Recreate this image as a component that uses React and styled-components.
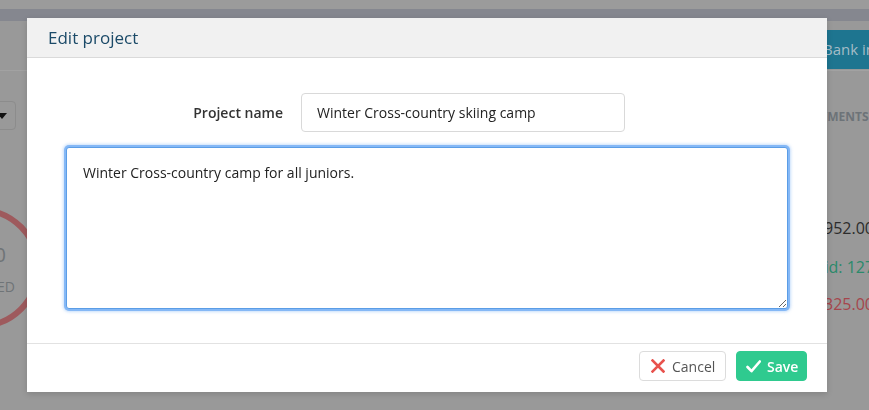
import styled, { createGlobalStyle } from "styled-components";

const GlobalStyle = createGlobalStyle`
  html, body {
    margin: 0;
    padding: 0;
    background: #999;
    font-family: "Open Sans", "Liberation Sans", sans-serif;
    overflow: hidden;
  }
  * {
    box-sizing: border-box;
  }
`;

// page behind the dimmed backdrop (colours already dimmed)
const Page = styled.div`
  width: 869px;
  height: 410px;
  background: #999;
  display: flex;
  flex-direction: column;
`;

const TopStrip = styled.div`
  height: 9px;
  background: #9b9b9b;
`;

const NavBand = styled.div`
  height: 12px;
  background: #85878f;
`;

const Toolbar = styled.div`
  height: 50px;
  display: flex;
  justify-content: flex-end;
  align-items: flex-start;
  padding-top: 9px;
  border-bottom: 1px solid #a2a2a2;
`;

const BankButton = styled.div`
  height: 39px;
  width: 80px;
  margin-right: -20px;
  padding-left: 14px;
  background: #1e7590;
  color: #a4bcc7;
  font-size: 15px;
  line-height: 39px;
  white-space: nowrap;
  overflow: hidden;
`;

const Body = styled.div`
  flex: 1;
  display: flex;
  justify-content: space-between;
`;

const LeftCol = styled.div`
  width: 60px;
  padding-top: 30px;
  display: flex;
  flex-direction: column;
`;

const Dropdown = styled.div`
  width: 26px;
  height: 29px;
  margin-left: -10px;
  border: 1px solid #8c8c8c;
  border-radius: 4px;
  display: flex;
  align-items: center;
  justify-content: flex-end;
  padding-right: 8px;
`;

const Chart = styled.svg`
  margin-top: 70px;
  overflow: visible;
`;

const RightCol = styled.div`
  width: 59px;
  padding-top: 37px;
  display: flex;
  flex-direction: column;
  white-space: nowrap;
  overflow: hidden;
`;

const Heading = styled.div`
  margin-left: -6px;
  font-size: 12px;
  line-height: 18px;
  font-weight: 700;
  color: #6d7378;
`;

const Amount = styled.div`
  margin-left: ${(p) => p.$indent}px;
  margin-top: ${(p) => p.$top}px;
  font-size: 16px;
  line-height: 22px;
  color: ${(p) => p.$color};
`;

// modal
const Modal = styled.div`
  position: fixed;
  left: 27px;
  top: 18px;
  width: 800px;
  height: 374px;
  background: #fff;
  display: flex;
  flex-direction: column;
  box-shadow: 0 2px 6px rgba(0, 0, 0, 0.15);
`;

const ModalHeader = styled.div`
  height: 40px;
  background: #f1f1f1;
  border-bottom: 1px solid #dadada;
  padding-left: 21px;
  display: flex;
  align-items: center;
`;

const Title = styled.h4`
  margin: 0;
  font-size: 17px;
  font-weight: 400;
  color: #1b4a68;
`;

const ModalBody = styled.div`
  flex: 1;
  padding: 35px 39px 0;
  display: flex;
  flex-direction: column;
  gap: 15px;
`;

const FormRow = styled.div`
  display: grid;
  grid-template-columns: 217px 324px;
  column-gap: 18px;
  align-items: center;
`;

const Label = styled.label`
  text-align: right;
  font-size: 14px;
  font-weight: 600;
  color: #333;
`;

const Input = styled.input`
  height: 39px;
  border: 1px solid #d9d9d9;
  border-radius: 4px;
  padding: 0 15px;
  font-family: inherit;
  font-size: 14px;
  color: #222;
  outline: none;
`;

const TextArea = styled.textarea`
  height: 162px;
  width: 722px;
  border: 1px solid #5b9de6;
  border-radius: 3px;
  padding: 15px 16px;
  font-family: inherit;
  font-size: 14px;
  line-height: 20px;
  color: #222;
  resize: vertical;
  outline: none;
  box-shadow: 0 0 0 2px rgba(120, 176, 244, 0.85), 0 0 3px 3px rgba(130, 182, 244, 0.45);
`;

const ModalFooter = styled.div`
  height: 49px;
  border-top: 1px solid #e2e2e2;
  padding: 7px 20px 0;
  display: flex;
  justify-content: flex-end;
  align-items: flex-start;
  gap: 10px;
`;

const Button = styled.button`
  height: 30px;
  width: ${(p) => (p.$primary ? "71px" : "87px")};
  padding: 0 0 0 ${(p) => (p.$primary ? "9px" : "11px")};
  border-radius: 4px;
  border: 1px solid ${(p) => (p.$primary ? "#2fca8f" : "#dcdcdc")};
  background: ${(p) => (p.$primary ? "#2fca8f" : "#fff")};
  color: ${(p) => (p.$primary ? "#fff" : "#555")};
  font-family: inherit;
  font-size: 14px;
  font-weight: ${(p) => (p.$primary ? 600 : 400)};
  display: flex;
  align-items: center;
  gap: ${(p) => (p.$primary ? "6px" : "7px")};
  cursor: pointer;
`;

const CrossIcon = () => (
  <svg width="14" height="14" viewBox="0 0 14 14">
    <path d="M1.5 1.5l11 11M12.5 1.5l-11 11" stroke="#e8524d" strokeWidth="2.6" strokeLinecap="square" fill="none" />
  </svg>
);

const CheckIcon = () => (
  <svg width="15" height="13" viewBox="0 0 15 13">
    <path d="M1.5 7l4 4.2L13.8 1.5" stroke="#fff" strokeWidth="2.6" strokeLinecap="round" strokeLinejoin="round" fill="none" />
  </svg>
);

export default function App() {
  return (
    <>
      <GlobalStyle />
      <Page>
        <TopStrip />
        <NavBand />
        <Toolbar>
          <BankButton>Bank import</BankButton>
        </Toolbar>
        <Body>
          <LeftCol>
            <Dropdown>
              <svg width="10" height="6" viewBox="0 0 10 6">
                <path d="M0 0h10L5 6z" fill="#111" />
              </svg>
            </Dropdown>
            <Chart width="60" height="140" viewBox="0 0 60 140">
              <circle cx="-20" cy="68" r="58" fill="none" stroke="#9e5a5d" strokeWidth="6" />
              <text x="6" y="62" fontSize="20" fill="#6f7477" textAnchor="end" fontFamily="Open Sans">
                10
              </text>
              <text x="15" y="92" fontSize="14" fill="#6f7477" textAnchor="end" fontFamily="Open Sans">
                INVOICED
              </text>
            </Chart>
          </LeftCol>
          <RightCol>
            <Heading>PAYMENTS</Heading>
            <Amount $indent={14} $top={91} $color="#2c2c2c">952.00</Amount>
            <Amount $indent={-4} $top={17} $color="#2b8a6b">Paid: 1270.00</Amount>
            <Amount $indent={14} $top={15} $color="#a6454c">325.00</Amount>
          </RightCol>
        </Body>
      </Page>

      <Modal>
        <ModalHeader>
          <Title>Edit project</Title>
        </ModalHeader>
        <ModalBody>
          <FormRow>
            <Label htmlFor="project-name">Project name</Label>
            <Input id="project-name" defaultValue="Winter Cross-country skiing camp" />
          </FormRow>
          <TextArea defaultValue="Winter Cross-country camp for all juniors." />
        </ModalBody>
        <ModalFooter>
          <Button>
            <CrossIcon />
            Cancel
          </Button>
          <Button $primary>
            <CheckIcon />
            Save
          </Button>
        </ModalFooter>
      </Modal>
    </>
  );
}
